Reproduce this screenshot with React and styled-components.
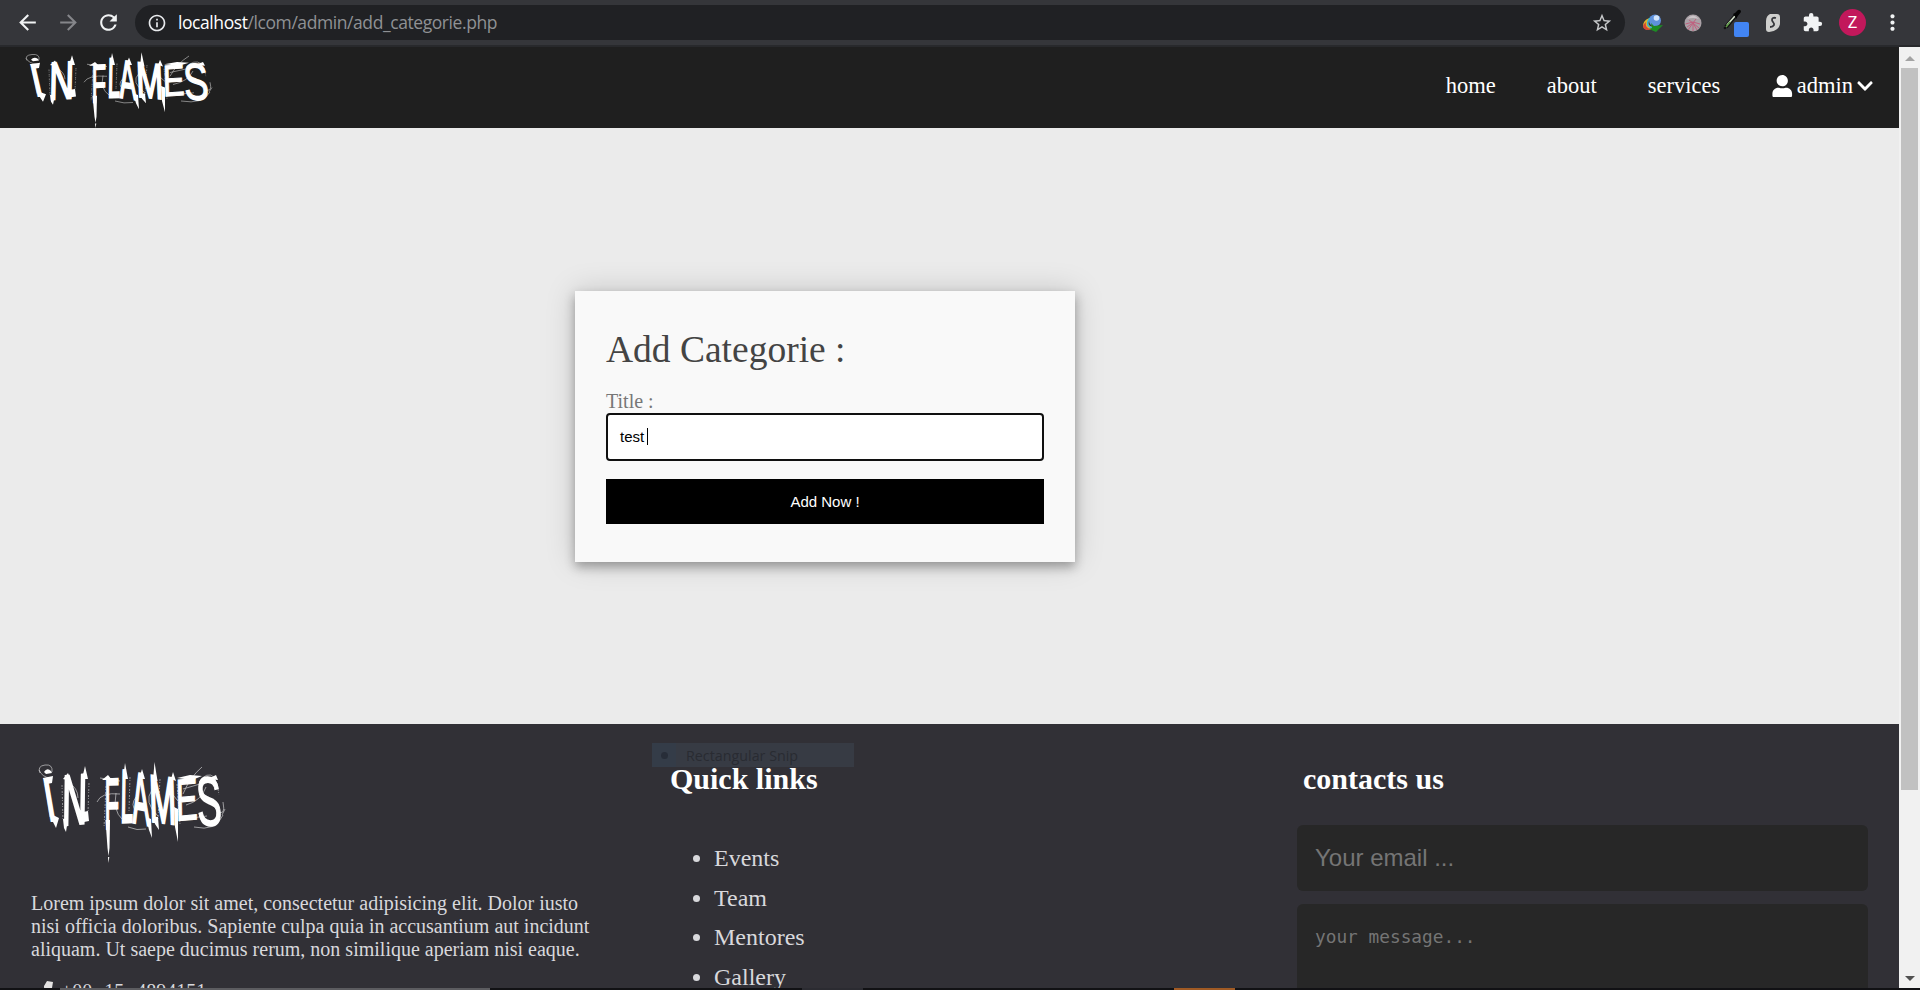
import React from "react";
import styled, { createGlobalStyle } from "styled-components";
import {
  MdArrowBack,
  MdArrowForward,
  MdRefresh,
  MdInfoOutline,
  MdStarBorder,
  MdExtension,
  MdMoreVert,
} from "react-icons/md";
import { FaUser, FaChevronDown } from "react-icons/fa";

const GlobalStyle = createGlobalStyle`
  * { box-sizing: border-box; }
  html, body { margin: 0; padding: 0; overflow: hidden; background: #111114; }
  body { font-family: "Liberation Serif", "Times New Roman", serif; }
`;

const Window = styled.div`
  display: flex;
  flex-direction: column;
  width: 1920px;
  height: 990px;
  overflow: hidden;
`;

/* Browser toolbar */
const Toolbar = styled.div`
  display: flex;
  align-items: center;
  flex: none;
  height: 47px;
  padding: 0 0 0 14px;
  background: #35363a;
  border-bottom: 2px solid #28292c;
  color: #f1f3f4;
`;

const ToolButton = styled.span`
  display: flex;
  align-items: center;
  justify-content: center;
  width: ${(p) => p.$width}px;
  flex: none;
  color: ${(p) => (p.$dim ? "#85868a" : "#f1f3f4")};
  svg { flex: none; }
`;

const Omnibox = styled.div`
  display: flex;
  align-items: center;
  flex: none;
  width: 1490px;
  height: 35px;
  margin-left: 14px;
  padding: 0 12px;
  border-radius: 18px;
  background: #202124;
  color: #e8eaed;
`;

const Address = styled.div`
  flex: 1;
  margin: 0 0 2px 11px;
  font: 17.5px/24px "Open Sans", "Noto Sans", sans-serif;
  letter-spacing: -0.42px;
  color: #8f9194;
  white-space: nowrap;
  b { font-weight: 400; color: #ffffff; }
`;

const Avatar = styled.span`
  display: flex;
  align-items: center;
  justify-content: center;
  flex: none;
  width: 27px;
  height: 27px;
  border-radius: 50%;
  background: #c2185b;
  color: #fff;
  font: 16px Roboto, sans-serif;
`;

/* Page */
const Viewport = styled.div`
  display: flex;
  flex: 1;
  min-height: 0;
`;

const Page = styled.div`
  display: flex;
  flex-direction: column;
  width: 1899px;
  min-height: 0;
  overflow: hidden;
  background: #ebebeb;
`;

const NavBar = styled.header`
  display: flex;
  justify-content: space-between;
  flex: none;
  height: 81px;
  padding: 6px 25px 0 23px;
  background: #1f1f1f;
`;

const NavLinks = styled.nav`
  display: flex;
  gap: 51px;
  height: 66px;
  align-items: center;
  font-size: 22.5px;
  color: #fff;
`;

const NavItem = styled.span`
  display: flex;
  align-items: center;
  gap: 3px;
`;

const Main = styled.main`
  flex: none;
  height: 596px;
  padding: 163px 0 0 575px;
`;

const Card = styled.form`
  display: flex;
  flex-direction: column;
  width: 500px;
  height: 271px;
  padding: 37px 31px 0;
  background: #f9f9f9;
  box-shadow: 0 5px 10px rgba(0, 0, 0, 0.3), 0 0 28px rgba(0, 0, 0, 0.17);
`;

const CardTitle = styled.h1`
  margin: 0 0 19px;
  font-size: 37.5px;
  line-height: 43px;
  font-weight: 400;
  color: #444;
`;

const Label = styled.label`
  font-size: 20px;
  line-height: 23px;
  height: 23px;
  color: #777;
`;

const TitleField = styled.div`
  display: flex;
  align-items: center;
  height: 48px;
  padding: 0 0 2px 12px;
  border: 2px solid #101010;
  border-radius: 4px;
  background: #fff;
  font: 15px "Liberation Sans", Arial, sans-serif;
  color: #000;
`;

const Caret = styled.span`
  width: 1px;
  height: 17px;
  margin-left: 3px;
  background: #000;
`;

const SubmitButton = styled.button`
  height: 45px;
  margin-top: 18px;
  padding: 0;
  border: 0;
  background: #000;
  color: #fff;
  font: 15px "Liberation Sans", Arial, sans-serif;
`;

/* Footer */
const Footer = styled.footer`
  display: flex;
  flex: 1;
  min-height: 0;
  background: #313036;
  color: #d8d8dc;
`;

const Column = styled.section`
  flex: none;
  width: 633px;
  padding: ${(p) => p.$padding};
`;

const Blurb = styled.p`
  width: 571px;
  margin: 29px 0 0 -5px;
  font-size: 20px;
  line-height: 23.2px;
`;

const PhoneRow = styled.div`
  display: flex;
  align-items: flex-start;
  gap: 2px;
  margin: 18px 0 0 6px;
  font-size: 20px;
  line-height: 23px;
  word-spacing: 7px;
`;

const Heading = styled.h2`
  margin: 0;
  font-size: 30px;
  line-height: 34px;
  color: #fff;
`;

const LinkList = styled.ul`
  margin: 43px 0 0;
  padding-left: 44px;
  font-size: 24px;
  line-height: 39.7px;
`;

const Field = styled.div`
  width: 571px;
  height: ${(p) => p.$height}px;
  margin: ${(p) => p.$top}px 0 0 -6px;
  padding: ${(p) => p.$inset}px 18px;
  border-radius: 6px;
  background: #272727;
  color: #757575;
  font: ${(p) => p.$font};
`;

const SnipMenuItem = styled.div`
  position: absolute;
  left: 652px;
  top: 743px;
  display: flex;
  align-items: center;
  width: 202px;
  height: 24px;
  background: #373b44;
  color: #292b32;
  font: 14.3px "Open Sans", sans-serif;
`;

const SnipMark = styled.span`
  display: flex;
  align-items: center;
  justify-content: center;
  width: 24px;
  height: 24px;
  margin-right: 10px;
  background: #343c48;
  &::after {
    content: "";
    width: 7px;
    height: 7px;
    border-radius: 50%;
    background: #272d38;
  }
`;

/* Scrollbar and taskbar edge */
const Scrollbar = styled.div`
  display: flex;
  flex-direction: column;
  align-items: center;
  justify-content: space-between;
  width: 21px;
  padding: 9px 0 7px;
  background: #f1f1f1;
`;

const Thumb = styled.div`
  width: 17px;
  height: 722px;
  margin: 7px 0 auto;
  background: #c1c1c1;
`;

const Arrow = styled.span`
  border: 5px solid transparent;
  border-top-width: ${(p) => (p.$up ? 0 : 5)}px;
  border-bottom-width: ${(p) => (p.$up ? 5 : 0)}px;
  border-${(p) => (p.$up ? "bottom" : "top")}-color: ${(p) => (p.$up ? "#a3a3a3" : "#505050")};
`;

const TaskbarEdge = styled.div`
  display: flex;
  flex: none;
  height: 2px;
  background: #111114;
`;

const TaskSlot = styled.span`
  width: ${(p) => p.$width}px;
  margin-left: ${(p) => p.$gap}px;
  background: ${(p) => p.$color};
`;

const LogoSvg = styled.svg`
  display: block;
  overflow: visible;
`;

const LETTERS = [
  { c: "I", w: 700, s: 0, t: "matrix(3.3 0 1.1 6.4 12.5 67)" },
  { c: "N", w: 400, s: 0.45, t: "matrix(3.4 -.3 -.1 7 26 70)" },
  { c: "F", w: 400, s: 0.3, t: "matrix(2.4 -.1 0 7.2 68.5 74)" },
  { c: "L", w: 400, s: 0.5, t: "matrix(2.2 -.1 -.1 7.4 84.5 67)" },
  { c: "A", w: 400, s: 0.45, t: "matrix(2.5 .5 .2 7.2 97 67)" },
  { c: "M", w: 400, s: 0.45, t: "matrix(3.2 .4 .2 6.6 114 66)" },
  { c: "E", w: 400, s: 0.2, t: "matrix(3.3 -.3 .1 5.9 140 66)" },
  { c: "S", w: 400, s: 0.25, t: "matrix(3.7 .1 .4 6.9 162 70)" },
];

function BandLogo({ height }) {
  return (
    <LogoSvg width="200" height={height} viewBox="0 8 200 100" preserveAspectRatio="none" fill="#fff">
      <g fontFamily="Liberation Sans, Arial, sans-serif" fontSize="10" stroke="#fff">
        {LETTERS.map(({ c, w, s, t }) => (
          <text key={c} transform={t} fontWeight={w} strokeWidth={s}>{c}</text>
        ))}
      </g>
      {/* ink spikes and drips */}
      <path d="M8 17q3-5 7-1l1 2-6 1zM7 23l10-2-1 7-5 1zM17 60l6 3-3 10-4-8zM27 64h5l-2 13-2-4zM27 24l5-6 3 8zM46 24l3-13 3 13zM47 57l5-1 1 10-5 1zM66 25l6-5 4 5zM69.500 65h4.500l-.5 28-1 8-1-8zM72 102l.5 6 .8-6zM87 24l2-16 3 16zM103 24l3-10 3 10zM110 62l5 2 1 19-3-8zM117 26l1.500-19 3 19zM118 62h4l1 13-4-6zM138 52l4 2 0 33-3-15zM135 24l2-7 3 9zM141 23l13-3 12 1-10 4zM172 24l8-4 2 5z" />
      {/* loose scratches */}
      <g fill="none" stroke="#fff" strokeWidth=".7" opacity=".75">
        <path d="M4 18q-3-7 5-8t7 7M3 15q3 7 11 8M9 29l5 33M32 27q10 6 10 16M61 47q4-10 23-8M64 23l20 3M80 38q-3 18 6 26M92 72q9 4 18 2M100 42q-6 8 0 14M116 35q-9 12 6 26M132 34l10 12M147 39q7-17 19-27M150 50q15-4 20-18M147 64l24-3M158 72q22 5 29-12M147 34l17-5M181 56q9 6 6-9M163 27q8-11 15-5M186 60l3-6" />
        <path d="M26 30l1 36M53 28l-1 30M70 31l-2 42M94 22l-1 34M124 24l-2 40M141 29l3 40M181 28l2 12" strokeWidth=".6" strokeDasharray="2 1 1 2" />
      </g>
    </LogoSvg>
  );
}

function DownloaderIcon() {
  return (
    <svg width="22" height="20" viewBox="0 0 22 20">
      <circle cx="13" cy="7.500" r="6" fill="#5f91dc" />
      <circle cx="14.500" cy="5" r="2.800" fill="#d2e4fa" />
      <path d="M8 5C2 6-1 13 3 16c4 2 8 0 9-2-6 0-7-4-4-9z" fill="#e2b52c" />
      <path d="M4 9c-4 3-4 7 1 8 2 0 4 0 5-1-5 0-7-3-6-7z" fill="#d44735" />
      <path d="M8 5c-4 5-3 9 3 10" fill="none" stroke="#36b3d6" strokeWidth="1.5" />
      <path d="M9 10l3 3 9-1-7 7-7-3 3-1z" fill="#1d8c24" />
    </svg>
  );
}

function SphereIcon() {
  return (
    <svg width="18" height="18" viewBox="0 0 18 18">
      <circle cx="9" cy="9" r="8.500" fill="#aaa1a6" />
      <path d="M1.500 10l7.500-2 7 2M9 9L4 16M9 9l4 7M9 9l6 5M9 9L3 13M9 9l3-4M9 9v8M9 9L5 6" stroke="#c0607f" strokeWidth="1" fill="none" />
      <path d="M3 5q6-7 12 0-6-2-12 0z" fill="#cbc4c7" />
    </svg>
  );
}

function DropperIcon() {
  return (
    <svg width="28" height="30" viewBox="0 0 28 30">
      <path d="M4 19L14 7" stroke="#111" strokeWidth="4" />
      <path d="M5 17l8-9" stroke="#d8e5d0" strokeWidth="1.6" />
      <path d="M4 19l4-5" stroke="#5c9a45" strokeWidth="1.5" />
      <path d="M11 6l2-1 3-3q3-1 3 2l-4 5v2z" fill="#050505" />
      <circle cx="3" cy="20" r="1.300" fill="#111" />
      <rect x="12" y="14" width="15" height="15" rx="2" fill="#4285f4" />
    </svg>
  );
}

function ShieldIcon() {
  return (
    <svg width="16" height="20" viewBox="0 0 16 20">
      <path d="M5 1h7q3 0 3 3v6c0 5-4 8-11 9q-3 0-3-3V8q0-5 4-7z" fill="#cfcfcd" />
      <path d="M11 5q-4-1-4 2c0 2 3 3 2 5-1 2-2 2-4 2" fill="none" stroke="#35363a" strokeWidth="1.8" />
    </svg>
  );
}

function BrowserToolbar() {
  return (
    <Toolbar>
      <ToolButton $width={26}><MdArrowBack size={25} /></ToolButton>
      <ToolButton $width={56} $dim><MdArrowForward size={25} /></ToolButton>
      <ToolButton $width={25}><MdRefresh size={25} /></ToolButton>
      <Omnibox>
        <MdInfoOutline size={20} />
        <Address><b>localhost</b>/lcom/admin/add_categorie.php</Address>
        <MdStarBorder size={22} color="#c6c8ca" />
      </Omnibox>
      <ToolButton $width={55}><DownloaderIcon /></ToolButton>
      <ToolButton $width={26}><SphereIcon /></ToolButton>
      <ToolButton $width={60}><DropperIcon /></ToolButton>
      <ToolButton $width={14}><ShieldIcon /></ToolButton>
      <ToolButton $width={64}><MdExtension size={21} /></ToolButton>
      <ToolButton $width={17}><Avatar>Z</Avatar></ToolButton>
      <ToolButton $width={62}><MdMoreVert size={25} /></ToolButton>
    </Toolbar>
  );
}

export default function App() {
  return (
    <>
      <GlobalStyle />
      <Window>
        <BrowserToolbar />
        <Viewport>
          <Page>
            <NavBar>
              <BandLogo height={75} />
              <NavLinks>
                <NavItem>home</NavItem>
                <NavItem>about</NavItem>
                <NavItem>services</NavItem>
                <NavItem><FaUser size={22.5} />admin<FaChevronDown size={18} /></NavItem>
              </NavLinks>
            </NavBar>
            <Main>
              <Card>
                <CardTitle>Add Categorie :</CardTitle>
                <Label>Title :</Label>
                <TitleField>test<Caret /></TitleField>
                <SubmitButton type="button">Add Now !</SubmitButton>
              </Card>
            </Main>
            <Footer>
              <Column $padding="39px 0 0 36px">
                <BandLogo height={100} />
                <Blurb>
                  Lorem ipsum dolor sit amet, consectetur adipisicing elit. Dolor iusto<br />
                  nisi officia doloribus. Sapiente culpa quia in accusantium aut incidunt<br />
                  aliquam. Ut saepe ducimus rerum, non similique aperiam nisi eaque.
                </Blurb>
                <PhoneRow>
                  <svg width="17" height="20" viewBox="0 0 17 20" fill="#e4e2e2">
                    <path d="M5 1l6 1-1 6-3 2 3 5 4-1 3 4-4 2C6 19 2 13 2 6z" />
                  </svg>
                  +00 15 4894151
                </PhoneRow>
              </Column>
              <Column $padding="38px 0 0 37px">
                <Heading>Quick links</Heading>
                <LinkList>
                  <li>Events</li>
                  <li>Team</li>
                  <li>Mentores</li>
                  <li>Gallery</li>
                </LinkList>
              </Column>
              <Column $padding="38px 0 0 37px">
                <Heading>contacts us</Heading>
                <Field $height={66} $top={29} $inset={19} $font='24px/28px "Liberation Sans", Arial, sans-serif'>
                  Your email ...
                </Field>
                <Field $height={150} $top={13} $inset={21} $font='17.8px/23px "DejaVu Sans Mono", monospace'>
                  your message...
                </Field>
              </Column>
            </Footer>
          </Page>
          <Scrollbar>
            <Arrow $up />
            <Thumb />
            <Arrow />
          </Scrollbar>
        </Viewport>
        <TaskbarEdge>
          <TaskSlot $gap={60} $width={430} $color="#5c5c60" />
          <TaskSlot $gap={312} $width={61} $color="#2b2b31" />
          <TaskSlot $gap={311} $width={61} $color="#a05a24" />
        </TaskbarEdge>
        <SnipMenuItem><SnipMark />Rectangular Snip</SnipMenuItem>
      </Window>
    </>
  );
}
